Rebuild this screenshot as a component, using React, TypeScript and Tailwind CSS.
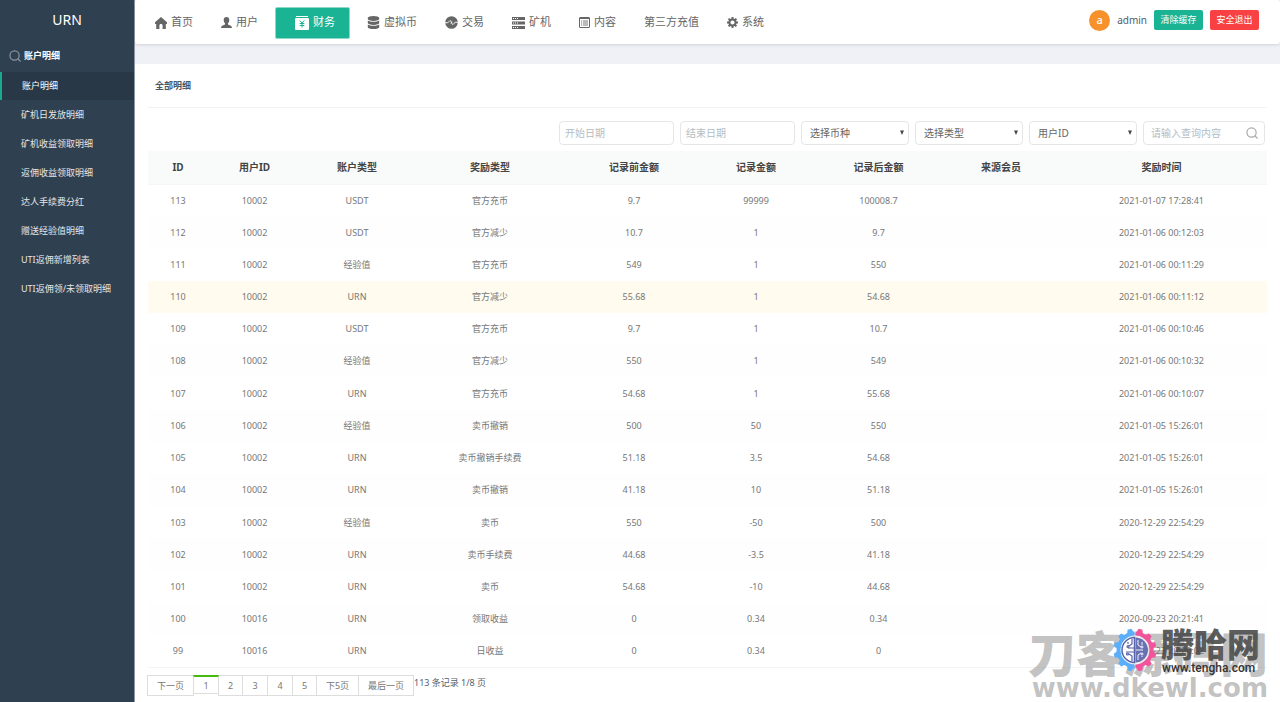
import type { ReactNode } from 'react'
import { FaDatabase } from 'react-icons/fa'

const menu = [
  '账户明细',
  '矿机日发放明细',
  '矿机收益领取明细',
  '返佣收益领取明细',
  '达人手续费分红',
  '赠送经验值明细',
  'UTI返佣新增列表',
  'UTI返佣领/未领取明细',
]

const columns = [
  { title: 'ID', width: 'w-[60px]' },
  { title: '用户ID', width: 'w-[93px]' },
  { title: '账户类型', width: 'w-[112px]' },
  { title: '奖励类型', width: 'w-[154px]' },
  { title: '记录前金额', width: 'w-[134px]' },
  { title: '记录金额', width: 'w-[110px]' },
  { title: '记录后金额', width: 'w-[135px]' },
  { title: '来源会员', width: 'w-[110px]' },
  { title: '奖励时间', width: 'w-[211px]' },
]

const rows = [
  ['113', '10002', 'USDT', '官方充币', '9.7', '99999', '100008.7', '', '2021-01-07 17:28:41'],
  ['112', '10002', 'USDT', '官方减少', '10.7', '1', '9.7', '', '2021-01-06 00:12:03'],
  ['111', '10002', '经验值', '官方充币', '549', '1', '550', '', '2021-01-06 00:11:29'],
  ['110', '10002', 'URN', '官方减少', '55.68', '1', '54.68', '', '2021-01-06 00:11:12'],
  ['109', '10002', 'USDT', '官方充币', '9.7', '1', '10.7', '', '2021-01-06 00:10:46'],
  ['108', '10002', '经验值', '官方减少', '550', '1', '549', '', '2021-01-06 00:10:32'],
  ['107', '10002', 'URN', '官方充币', '54.68', '1', '55.68', '', '2021-01-06 00:10:07'],
  ['106', '10002', '经验值', '卖币撤销', '500', '50', '550', '', '2021-01-05 15:26:01'],
  ['105', '10002', 'URN', '卖币撤销手续费', '51.18', '3.5', '54.68', '', '2021-01-05 15:26:01'],
  ['104', '10002', 'URN', '卖币撤销', '41.18', '10', '51.18', '', '2021-01-05 15:26:01'],
  ['103', '10002', '经验值', '卖币', '550', '-50', '500', '', '2020-12-29 22:54:29'],
  ['102', '10002', 'URN', '卖币手续费', '44.68', '-3.5', '41.18', '', '2020-12-29 22:54:29'],
  ['101', '10002', 'URN', '卖币', '54.68', '-10', '44.68', '', '2020-12-29 22:54:29'],
  ['100', '10016', 'URN', '领取收益', '0', '0.34', '0.34', '', '2020-09-23 20:21:41'],
  ['99', '10016', 'URN', '日收益', '0', '0.34', '0', '', '2020-09-23 20:20:02'],
]

const pages = [
  { label: '下一页', width: 'w-[47px]' },
  { label: '1', width: 'w-[26px]', active: true },
  { label: '2', width: 'w-[25px]' },
  { label: '3', width: 'w-[26px]' },
  { label: '4', width: 'w-[26px]' },
  { label: '5', width: 'w-[25px]' },
  { label: '下5页', width: 'w-[43px]' },
  { label: '最后一页', width: 'w-[56px]' },
]

function HomeIcon() {
  return (
    <svg width="12" height="12" viewBox="0 0 12 12" fill="currentColor">
      <path d="M6 0 0 5.300v1.700h1.200V12h3.200V8.600c0-1 .6-1.600 1.600-1.600s1.600.6 1.600 1.600V12h3.200V7H12V5.300z" />
    </svg>
  )
}

function UserIcon() {
  return (
    <svg width="11" height="11" viewBox="0 0 11 11" fill="currentColor">
      <path d="M5.500 0C3.700 0 2.700 1.200 2.700 2.900c0 1.500.6 2.700 1.400 3.500.2.9-.3 1.300-1.200 1.600C1.200 8.600.2 9 0 11h11c-.2-2-1.200-2.400-2.900-3-.9-.3-1.400-.7-1.200-1.600.8-.8 1.400-2 1.400-3.500C8.300 1.200 7.300 0 5.500 0z" />
    </svg>
  )
}

function FinanceIcon() {
  return (
    <svg width="14" height="14" viewBox="0 0 14 14">
      <path d="M1 0.500h12" stroke="#fff" />
      <rect y="2" width="14" height="12" rx="1" fill="#fff" />
      <path d="M4.700 4.500 7 7l2.300-2.500M7 7v4.500M4.700 7.500h4.600M4.700 9.500h4.600" fill="none" stroke="#1ab394" />
    </svg>
  )
}

function TradeIcon() {
  return (
    <svg width="13" height="13" viewBox="0 0 13 13">
      <circle cx="6.500" cy="6.500" r="6.300" fill="#666" />
      <path
        d="M0 6.600 2.800 6.800 5 4.500 6.900 6.300 5.900 7.400M13 6.400 10.200 6.200 8 8.600 6.100 6.800 7.100 5.700"
        fill="none"
        stroke="#fff"
        strokeWidth="0.9"
      />
    </svg>
  )
}

function MinerIcon() {
  return (
    <svg width="13" height="12" viewBox="0 0 13 12">
      <path d="M0 0h13v3H0zM0 4.500h13v3H0zM0 9h13v3H0z" fill="#666" />
      <path d="M1 1.500h5M1 6h5M1 10.500h5" stroke="#fff" strokeDasharray="1 1" />
    </svg>
  )
}

function ContentIcon() {
  return (
    <svg width="11" height="11" viewBox="0 0 11 11" stroke="#666" fill="none">
      <rect x="0.500" y="0.500" width="10" height="10" rx="0.500" />
      <path d="M0.500 1.500h10" />
      <path d="M2 4h1.200M4 4h5M2 6h1.200M4 6h5M2 8h1.200M4 8h5" strokeWidth="0.900" />
    </svg>
  )
}

function GearIcon() {
  return (
    <svg width="11" height="11" viewBox="0 0 11 11" fill="none" stroke="#666">
      <circle cx="5.500" cy="5.500" r="3.100" strokeWidth="2" />
      <path
        d="M5.500 0v2M5.500 9v2M0 5.500h2M9 5.500h2M1.600 1.600 3 3M8 8l1.400 1.400M1.600 9.400 3 8M8 3l1.400-1.400"
        strokeWidth="2"
      />
    </svg>
  )
}

function SearchIcon() {
  return (
    <svg width="12" height="12" viewBox="0 0 13 13" fill="none" stroke="currentColor">
      <circle cx="6" cy="6" r="5" strokeWidth="1.300" />
      <path d="m9.500 9.500 3 3" strokeWidth="1.300" />
    </svg>
  )
}

type NavProps = { icon?: ReactNode; label: string; active?: boolean }

function NavItem({ icon, label, active }: NavProps) {
  return (
    <li>
      <a
        href="#"
        className={
          active
            ? 'mx-[3px] flex h-8 items-center gap-1 rounded-xs border border-[#8fd8c8] bg-[#1ab394] pr-[14px] pb-px pl-[19px] text-white'
            : 'flex h-8 items-center gap-1 px-[14px] pb-px text-[#666]'
        }
      >
        {icon}
        {label}
      </a>
    </li>
  )
}

function Sidebar() {
  return (
    <aside className="w-[135px] shrink-0 border-r border-[#8c96a3] bg-[#2f4050] text-[9px] text-white">
      <h1 className="h-10 text-center text-[14px] leading-10">URN</h1>
      <div className="flex h-8 items-center gap-[3px] pl-[9px] font-bold">
        <span className="text-[#8a949e]">
          <SearchIcon />
        </span>
        账户明细
      </div>
      <ul className="flex flex-col gap-px">
        {menu.map((item, i) => (
          <li key={item}>
            <a
              href="#"
              className={
                i === 0
                  ? 'block h-7 border-l-2 border-[#19aa8d] bg-[#293846] pl-5 leading-[27px]'
                  : 'block h-7 pl-[21px] leading-[27px] text-[#e4e7ea]'
              }
            >
              {item}
            </a>
          </li>
        ))}
      </ul>
    </aside>
  )
}

function Header() {
  return (
    <header className="flex h-11 items-start justify-between rounded-[3px] bg-white pr-[21px] pl-[6px] shadow-[0_1px_3px_rgba(0,0,0,0.12)]">
      <nav className="pt-[7px]">
        <ul className="flex text-[11px]">
          <NavItem icon={<HomeIcon />} label="首页" />
          <NavItem icon={<UserIcon />} label="用户" />
          <NavItem icon={<FinanceIcon />} label="财务" active />
          <NavItem icon={<FaDatabase size={13} />} label="虚拟币" />
          <NavItem icon={<TradeIcon />} label="交易" />
          <NavItem icon={<MinerIcon />} label="矿机" />
          <NavItem icon={<ContentIcon />} label="内容" />
          <NavItem label="第三方充值" />
          <NavItem icon={<GearIcon />} label="系统" />
        </ul>
      </nav>
      <div className="flex h-10 items-center gap-[7px]">
        <span className="flex size-[21px] items-center justify-center rounded-full bg-[#f7912b] text-[11px] font-medium text-white">
          a
        </span>
        <span className="text-[10px] text-[#4e5d6c]">admin</span>
        <button className="h-5 w-[49px] rounded-xs bg-[#1ab394] text-[9px] text-white">清除缓存</button>
        <button className="h-5 w-[49px] rounded-xs bg-[#f94144] text-[9px] text-white">安全退出</button>
      </div>
    </header>
  )
}

function FilterSelect({ label }: { label: string }) {
  return (
    <div className="relative w-[108px]">
      <select
        aria-label={label}
        className="h-6 w-full appearance-none rounded-[4px] border border-[#e4e6e8] bg-white pl-2 text-[#666]"
      >
        <option>{label}</option>
      </select>
      <svg className="pointer-events-none absolute top-[9px] right-[5px]" width="4" height="5" viewBox="0 0 4 5">
        <path d="M0 0.500h4L2 5z" fill="#444" />
      </svg>
    </div>
  )
}

function Filters() {
  return (
    <form className="flex justify-end gap-[6px] pt-[13px] pr-[2px] pb-[6px] text-[10px]">
      <input
        aria-label="开始日期"
        placeholder="开始日期"
        className="h-6 w-[115px] rounded-[4px] border border-[#e4e6e8] pl-[5px] placeholder:text-[#b4bcc2]"
      />
      <input
        aria-label="结束日期"
        placeholder="结束日期"
        className="h-6 w-[115px] rounded-[4px] border border-[#e4e6e8] pl-[5px] placeholder:text-[#b4bcc2]"
      />
      <FilterSelect label="选择币种" />
      <FilterSelect label="选择类型" />
      <FilterSelect label="用户ID" />
      <div className="flex h-6 w-[122px] items-center justify-between rounded-[4px] border border-[#e4e6e8] pr-[6px] pl-[7px]">
        <input
          aria-label="请输入查询内容"
          placeholder="请输入查询内容"
          className="w-[90px] placeholder:text-[#b4bcc2]"
        />
        <button type="button" aria-label="查询" className="text-[#aaa]">
          <SearchIcon />
        </button>
      </div>
    </form>
  )
}

function RecordTable() {
  return (
    <table className="h-[517px] w-full table-fixed border-b border-[#f4f4f4] text-center text-[9px] text-[#777]">
      <thead>
        <tr className="h-[33px] border-b border-[#f4f5f5] bg-[#f9fbfb] text-[10px] text-[#444]">
          {columns.map((c) => (
            <th key={c.title} className={c.width}>
              {c.title}
            </th>
          ))}
        </tr>
      </thead>
      <tbody>
        {rows.map((row) => (
          <tr key={row[0]} className={row[0] === '110' ? 'h-8 bg-[#fffbee]' : 'h-8 even:bg-[#fefefe]'}>
            {row.map((cell, i) => (
              <td key={i}>{cell}</td>
            ))}
          </tr>
        ))}
      </tbody>
    </table>
  )
}

function pageClass(width: string, active?: boolean) {
  const base = `${width} -mr-px text-center last:mr-0`
  return active
    ? `${base} relative h-[19px] border border-t-2 border-[#ddd] border-t-[#46b80e] leading-[18px]`
    : `${base} h-[21px] border border-[#ddd] leading-5`
}

function Pagination() {
  return (
    <div className="-ml-px flex items-start pt-[7px] text-[9px]">
      <nav className="flex items-start text-[#777]">
        {pages.map((p) => (
          <a key={p.label} href="#" className={pageClass(p.width, p.active)}>
            {p.label}
          </a>
        ))}
      </nav>
      <span className="leading-4 text-[#55606b]">113 条记录 1/8 页</span>
    </div>
  )
}

function GearLogo() {
  const teeth = [0, 30, 60, 90, 120, 150, 180, 210, 240, 270, 300, 330]
  return (
    <svg width="44" height="44" viewBox="0 0 44 44">
      <defs>
        <clipPath id="left">
          <rect width="21.500" height="44" />
        </clipPath>
        <clipPath id="right">
          <rect x="22.500" width="21.500" height="44" />
        </clipPath>
        <g id="gear">
          <circle cx="22" cy="22" r="16.500" fill="none" strokeWidth="4" />
          {teeth.map((a) => (
            <path key={a} d="M20 0.500h4l1.500 4.500h-7z" transform={`rotate(${a + 15} 22 22)`} stroke="none" />
          ))}
        </g>
      </defs>
      <circle cx="22" cy="22" r="15" fill="#fff" fillOpacity="0.7" />
      <use href="#gear" clipPath="url(#left)" fill="#5aaefa" stroke="#5aaefa" />
      <use href="#gear" clipPath="url(#right)" fill="#f0559c" stroke="#f0559c" />
      <path d="M21.500 9.500a12.500 12.500 0 0 0 0 25z" fill="#fff" fillOpacity="0.800" stroke="#5863ac" strokeWidth="1.500" />
      <path d="M22.500 9.500a12.500 12.500 0 0 1 0 25z" fill="#5863ac" fillOpacity="0.900" />
      <g fill="none" stroke="#5863ac" strokeWidth="1.200">
        <path d="M19 11v5l-3 2M19 33v-5l-3-2M21 20h-6M21 24h-8M15 14v2" />
        <circle cx="15" cy="18.500" r="1" />
        <circle cx="14.500" cy="26" r="1" />
      </g>
      <g fill="none" stroke="#fff" strokeWidth="0.900">
        <path d="M25 12v5l3 2M25 32v-5l3-2M23 22h7M29 14v3M29 29v-1" />
        <circle cx="29" cy="19" r="1" />
        <circle cx="29" cy="26" r="1" />
      </g>
    </svg>
  )
}

function Watermarks() {
  return (
    <div className="pointer-events-none absolute right-0 bottom-0 h-[75px] w-[255px] whitespace-nowrap">
      <div className="absolute right-[12px] bottom-0 flex flex-col items-end font-black text-[#777]/45">
        <p className="text-[48px] leading-[42px]">刀客源码网</p>
        <p className="font-['DejaVu_Sans',sans-serif] text-[26px] leading-[27px] font-bold">www.dkewl.com</p>
      </div>
      <div className="absolute top-[1px] right-[20px] flex items-start gap-1">
        <GearLogo />
        <div className="text-[#4c4c4c]">
          <p className="text-[33px] leading-[34px] font-black opacity-90">腾哈网</p>
          <p className="pl-px font-[Roboto,sans-serif] text-[12px] leading-3 font-medium text-[#333]">www.tengha.com</p>
        </div>
      </div>
    </div>
  )
}

export default function App() {
  return (
    <div className="relative flex min-h-screen bg-[#f0f1f6] font-['Noto_Sans','Noto_Sans_CJK_SC',sans-serif]">
      <Sidebar />
      <div className="flex min-w-0 flex-1 flex-col gap-5">
        <Header />
        <main className="flex-1 bg-white px-[13px]">
          <h2 className="h-11 border-b border-[#f2f2f2] pl-[7px] text-[9px] leading-[44px] font-bold text-[#4a5560]">
            全部明细
          </h2>
          <Filters />
          <RecordTable />
          <Pagination />
        </main>
      </div>
      <Watermarks />
    </div>
  )
}
